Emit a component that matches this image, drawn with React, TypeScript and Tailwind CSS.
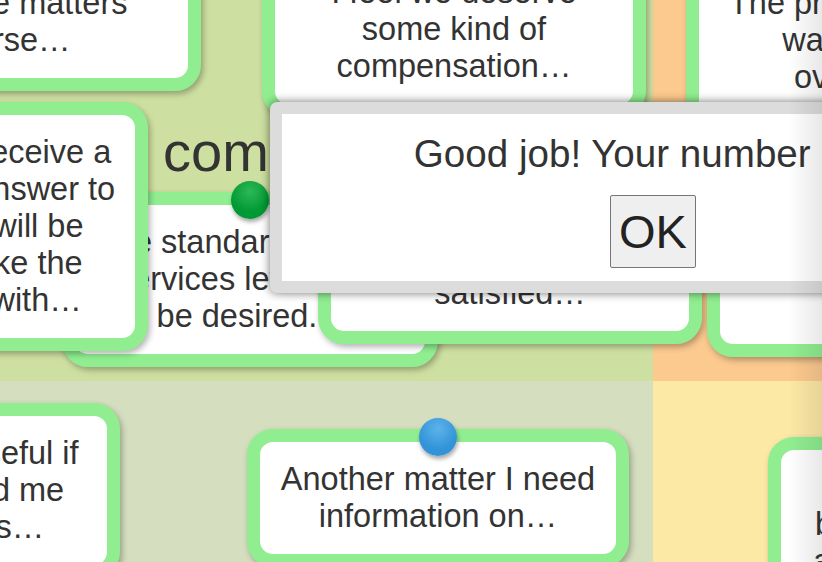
import React from "react";

type Note = {
  pos: string;
  pad?: string;
  lines: string[];
  pin?: "green" | "blue";
};

// board notes, in stacking order
const notes: Note[] = [
  { pos: "left-[-179px] top-[-84px] w-[380px]", lines: ["We were kept waiting", "to make matters", "worse…"] },
  { pos: "left-[262px] top-[-58px] w-[384px]", lines: ["I feel we deserve", "some kind of", "compensation…"] },
  { pos: "left-[686px] top-[-47px] w-[384px]", lines: ["The problem I raised", "was basically", "overlooked."] },
  {
    pos: "left-[62px] top-[192px] w-[376px]",
    pad: "pl-[19px] pr-[45px]",
    lines: ["The standard of the", "services left a lot", "be desired."],
    pin: "green",
  },
  { pos: "left-[318px] top-[206px] w-[384px]", lines: ["I was not fully", "satisfied…"] },
  {
    pos: "left-[-232px] top-[102px] w-[380px]",
    lines: ["We hope to receive a", "quick, clear answer to", "this, which will be", "used to make the", "our issues with…"],
  },
  { pos: "left-[707px] top-[145px] w-[384px]", lines: ["The staff were", "friendly, but the", "wait was far", "too long…"] },
  { pos: "left-[-241px] top-[403px] w-[361px]", lines: ["It would be useful if", "someone told me", "more details…"] },
  { pos: "left-[247px] top-[429px] w-[382px]", lines: ["Another matter I need", "information on…"], pin: "blue" },
  { pos: "left-[768px] top-[437px] w-[374px]", lines: ["Can you tell me", "by when this will be", "addressed, please?"] },
];

function Pin({ color }: { color: "green" | "blue" }) {
  const fill =
    color === "green"
      ? "bg-[radial-gradient(circle_at_50%_28%,#2db856,#009933_62%)]"
      : "bg-[radial-gradient(circle_at_50%_28%,#5db3ea,#3293d8_62%)]";
  return (
    <span
      className={`absolute -top-[24px] left-1/2 h-[38px] w-[38px] -translate-x-1/2 rounded-full shadow-[1px_3px_4px_rgba(0,0,0,0.35)] ${fill}`}
    />
  );
}

function Card({ note }: { note: Note }) {
  return (
    <div
      className={`absolute ${note.pos} ${note.pad ?? "px-[19px]"} rounded-[26px] border-[13px] border-[#90ee90] bg-white py-[19px] text-center text-[32.5px] leading-[37px] text-[#333] shadow-[2px_3px_6px_rgba(0,0,0,0.3)]`}
    >
      {note.pin && <Pin color={note.pin} />}
      {note.lines.map((l, i) => (
        <div key={i} className="whitespace-nowrap">
          {l}
        </div>
      ))}
    </div>
  );
}

export default function App() {
  return (
    <div className="relative h-[562px] w-full overflow-hidden font-['Liberation_Sans',Arial,sans-serif]">
      <div className="grid h-full grid-cols-[653px_1fr] grid-rows-[381px_1fr]">
        <div className="bg-[#cee0a1]" />
        <div className="bg-[#fcca8f]" />
        <div className="bg-[#d5dfbf]" />
        <div className="bg-[#fde9a6]" />
      </div>

      <h2 className="absolute left-[163px] top-[124px] whitespace-nowrap text-[56px] leading-none text-[#333]">
        complaints
      </h2>

      {notes.map((n, i) => (
        <Card key={i} note={n} />
      ))}

      {/* alert */}
      <div className="absolute left-[270px] top-[102px] h-[191px] w-[766px] rounded-[7px] border-[12px] border-[#dcdcdc] bg-white shadow-[0_0_10px_rgba(0,0,0,0.55)]">
        <div className="flex flex-col items-center pt-[21px]">
          <p className="whitespace-nowrap text-[38.6px] leading-[38px] text-[#333]">Good job! Your number is 7.</p>
          <button className="mt-[22px] h-[73px] w-[86px] rounded-[2px] border border-[#767676] bg-[#efefef] text-[47px] leading-none text-[#222]">
            OK
          </button>
        </div>
      </div>

      <div className="pointer-events-none absolute inset-y-0 right-0 w-[34px] bg-linear-to-r from-transparent to-black/[0.09]" />
    </div>
  );
}
